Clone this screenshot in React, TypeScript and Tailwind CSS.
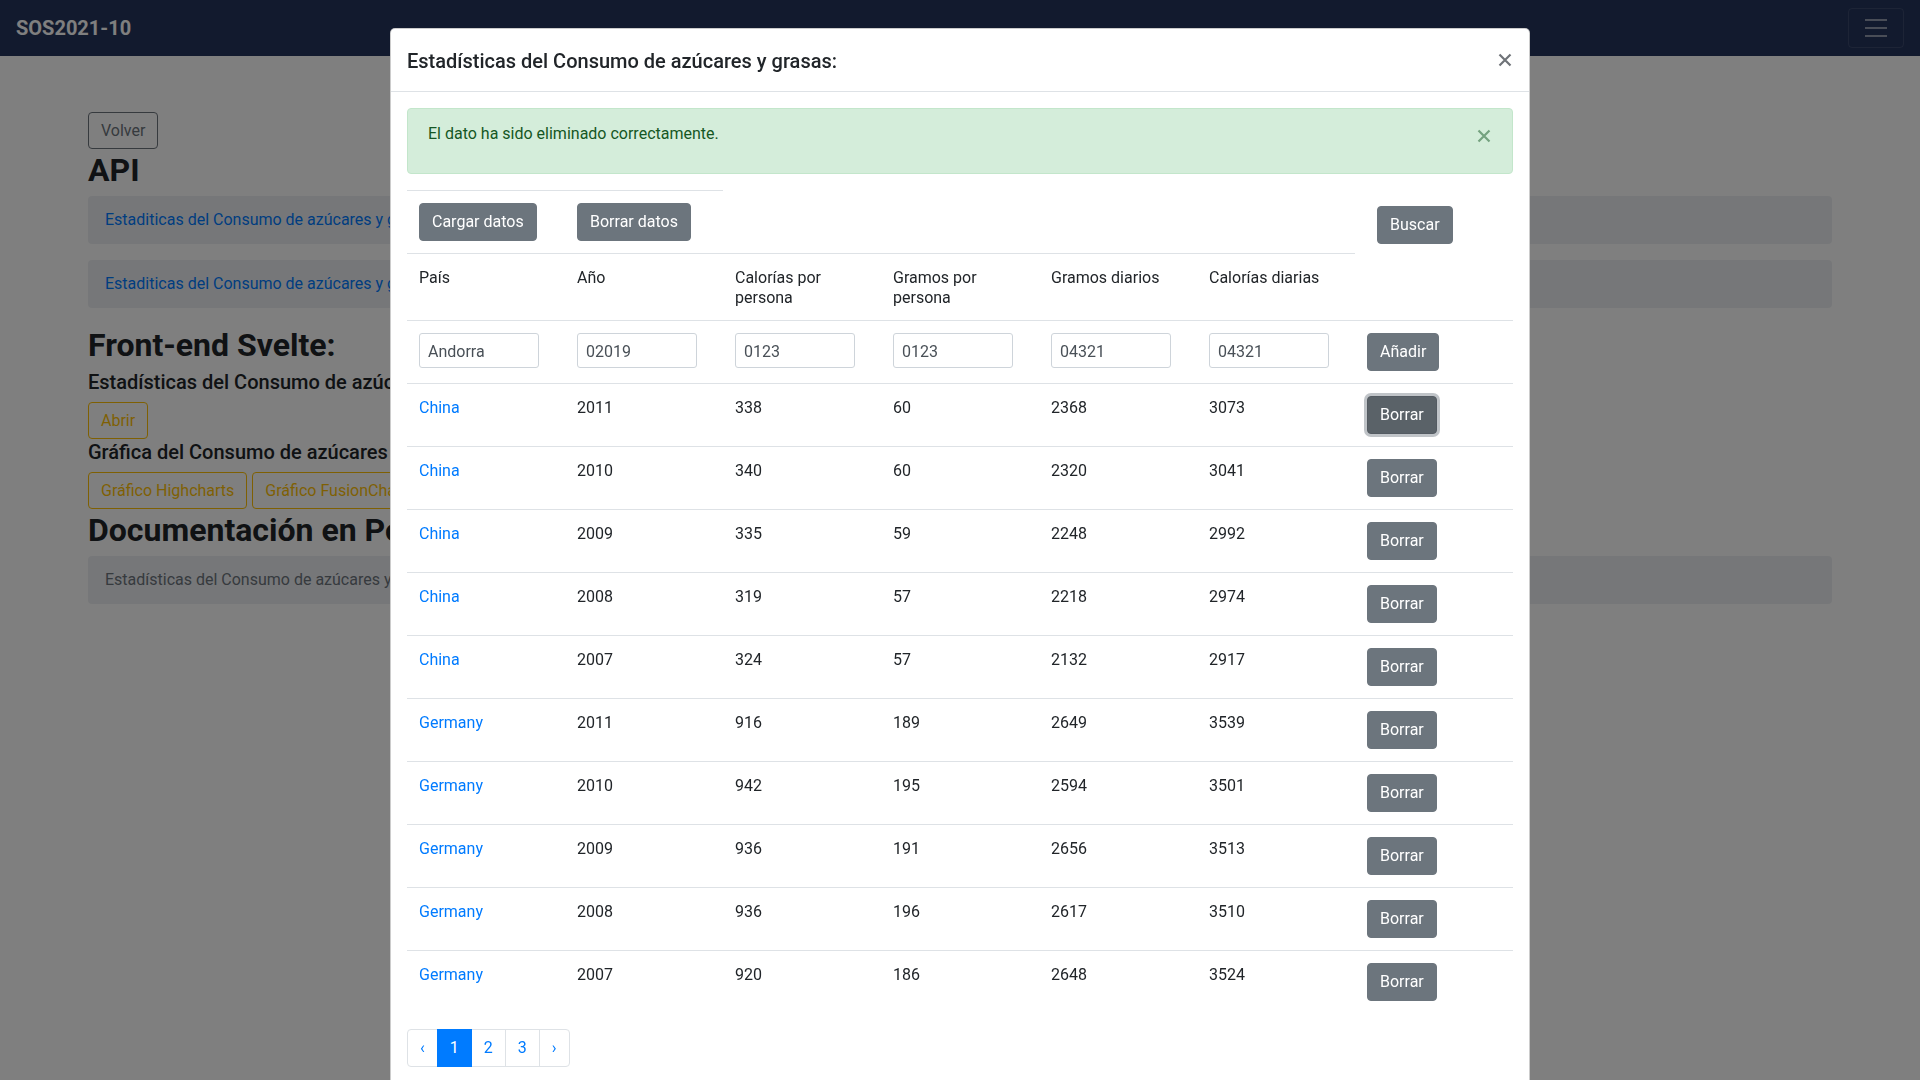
import React from "react";

// ─── Data ─────────────────────────────────────────────────────────────────────

const ROWS: [string, number, number, number, number, number][] = [
  ["China", 2011, 338, 60, 2368, 3073],
  ["China", 2010, 340, 60, 2320, 3041],
  ["China", 2009, 335, 59, 2248, 2992],
  ["China", 2008, 319, 57, 2218, 2974],
  ["China", 2007, 324, 57, 2132, 2917],
  ["Germany", 2011, 916, 189, 2649, 3539],
  ["Germany", 2010, 942, 195, 2594, 3501],
  ["Germany", 2009, 936, 191, 2656, 3513],
  ["Germany", 2008, 936, 196, 2617, 3510],
  ["Germany", 2007, 920, 186, 2648, 3524],
];

const HEADERS = ["País", "Año", "Calorías por persona", "Gramos por persona", "Gramos diarios", "Calorías diarias"];
const INPUTS = ["Andorra", "02019", "0123", "0123", "04321", "04321"];

// ─── Small bits ───────────────────────────────────────────────────────────────

function Btn({ children, focused }: { children: React.ReactNode; focused?: boolean }) {
  return (
    <button
      className={
        focused
          ? "h-[38px] px-3 rounded-[4px] border border-[#545b62] bg-[#5a6268] text-white text-[16px] leading-6 whitespace-nowrap shadow-[0_0_0_3px_rgba(130,138,145,0.5)]"
          : "h-[38px] px-3 rounded-[4px] border border-[#6c757d] bg-[#6c757d] text-white text-[16px] leading-6 whitespace-nowrap"
      }
    >
      {children}
    </button>
  );
}

function CloseX({ color }: { color: string }) {
  return (
    <svg width="16" height="16" viewBox="0 0 16 16">
      <path d="M2.5 2.5l11 11M13.5 2.5l-11 11" stroke={color} strokeWidth="2.2" strokeLinecap="butt" />
    </svg>
  );
}

// ─── Main ─────────────────────────────────────────────────────────────────────

export default function App() {
  return (
    <div className="relative h-screen overflow-hidden bg-white text-[#212529] font-['Roboto',_'Liberation_Sans',_sans-serif] text-[16px] leading-6">
      {/* navbar */}
      <nav className="h-14 bg-[#24345c] flex items-center justify-between px-4">
        <span className="text-white text-[20px] font-bold leading-[30px]">SOS2021-10</span>
        <button className="w-[56px] h-[40px] rounded-[4px] border border-white/10 flex items-center justify-center">
          <svg width="30" height="30" viewBox="0 0 30 30">
            <path d="M4 7h22M4 15h22M4 23h22" stroke="rgba(255,255,255,0.5)" strokeWidth="2" />
          </svg>
        </button>
      </nav>

      {/* page behind the modal */}
      <main className="px-[88px] pt-[56px]">
        <button className="h-[37px] px-3 rounded-[4px] border border-[#6c757d] text-[#6c757d]">Volver</button>
        <h2 className="mt-[2px] mb-[7px] text-[32px] font-bold leading-[38px]">API</h2>
        <div className="h-12 mb-4 px-[17px] py-3 rounded-[4px] bg-[#edeff3] text-[#007bff] whitespace-nowrap">
          Estaditicas del Consumo de azúcares y grasas v1
        </div>
        <div className="h-12 mb-[18px] px-[17px] py-3 rounded-[4px] bg-[#edeff3] text-[#007bff] whitespace-nowrap">
          Estaditicas del Consumo de azúcares y grasas v2
        </div>
        <h2 className="mb-[6px] text-[32px] font-bold leading-[38px]">Front-end Svelte:</h2>
        <h5 className="mb-2 text-[20px] font-medium leading-6">Estadísticas del Consumo de azúcares y grasas:</h5>
        <button className="h-[37px] px-3 rounded-[4px] border border-[#ffc107] text-[#ffc107]">Abrir</button>
        <h5 className="mt-[1px] mb-2 text-[20px] font-medium leading-6">Gráfica del Consumo de azúcares y grasas:</h5>
        <div className="flex gap-[5px]">
          <button className="h-[37px] px-3 rounded-[4px] border border-[#ffc107] text-[#ffc107]">Gráfico Highcharts</button>
          <button className="h-[37px] px-3 rounded-[4px] border border-[#ffc107] text-[#ffc107]">Gráfico FusionCharts</button>
        </div>
        <h2 className="mt-[2px] mb-[7px] text-[32px] font-bold leading-[38px]">Documentación en Postman</h2>
        <div className="h-12 px-[17px] py-3 rounded-[4px] bg-[#edeff3] text-[#6c757d] whitespace-nowrap">
          Estadísticas del Consumo de azúcares y grasas
        </div>
      </main>

      {/* backdrop */}
      <div className="fixed inset-0 bg-black/50" />

      {/* modal */}
      <div className="fixed inset-0 overflow-hidden">
        <div className="mx-auto mt-[28px] w-[1140px] rounded-[5px] border border-black/20 bg-white">
          <div className="flex items-start justify-between p-4 border-b border-[#dee2e6]">
            <h5 className="relative top-px text-[20px] font-medium leading-[30px]">Estadísticas del Consumo de azúcares y grasas:</h5>
            <div className="h-[30px] flex items-center">
              <CloseX color="#6f7378" />
            </div>
          </div>

          <div className="p-4">
            {/* alert */}
            <div className="relative mb-4 h-[66px] rounded-[4px] border border-[#c3e6cb] bg-[#d4edda] text-[#155724] pl-5 pr-16 pt-3">
              <p className="pt-px">El dato ha sido eliminado correctamente.</p>
              <div className="absolute right-[20px] top-[19px]">
                <CloseX color="#74a27f" />
              </div>
            </div>

            {/* table */}
            <div className="w-[1106px]">
              <div className="flex">
                <div className="flex w-[316px] border-t border-[#dee2e6]">
                  <div className="w-[158px] p-3"><Btn>Cargar datos</Btn></div>
                  <div className="w-[158px] p-3"><Btn>Borrar datos</Btn></div>
                </div>
                <div className="w-[632px]" />
                <div className="w-[158px] pl-[22px] pt-4"><Btn>Buscar</Btn></div>
              </div>

              <div className="flex">
                <div className="flex w-[948px] border-t border-[#dee2e6]">
                  {HEADERS.map(h => (
                    <div key={h} className="w-[158px] px-3 pt-[14px] pb-[12px] leading-5">{h}</div>
                  ))}
                </div>
                <div className="w-[158px]" />
              </div>

              <div className="flex border-t border-[#dee2e6]">
                {INPUTS.map((v, i) => (
                  <div key={i} className="w-[158px] p-3">
                    <input
                      readOnly
                      value={v}
                      className="w-[120px] h-[35px] px-2 pt-px rounded-[3px] border border-[#ced4da] text-[#495057] text-[16px] outline-none"
                    />
                  </div>
                ))}
                <div className="w-[158px] p-3"><Btn>Añadir</Btn></div>
              </div>

              {ROWS.map((r, i) => (
                <div key={i} className="flex border-t border-[#dee2e6]">
                  <div className="w-[158px] p-3 text-[#007bff]">{r[0]}</div>
                  {r.slice(1).map((c, j) => (
                    <div key={j} className="w-[158px] p-3">{c}</div>
                  ))}
                  <div className="w-[158px] p-3"><Btn focused={i === 0}>Borrar</Btn></div>
                </div>
              ))}
            </div>

            {/* pagination */}
            <div className="mt-4 flex">
              <span className="h-[38px] px-3 flex items-center border border-[#dee2e6] rounded-l-[4px] text-[#007bff]">‹</span>
              <span className="relative z-10 -ml-px h-[38px] px-3 flex items-center border border-[#007bff] bg-[#007bff] text-white">1</span>
              <span className="-ml-px h-[38px] px-3 flex items-center border border-[#dee2e6] text-[#007bff]">2</span>
              <span className="-ml-px h-[38px] px-3 flex items-center border border-[#dee2e6] text-[#007bff]">3</span>
              <span className="-ml-px h-[38px] px-3 flex items-center border border-[#dee2e6] rounded-r-[4px] text-[#007bff]">›</span>
            </div>
          </div>
        </div>
      </div>
    </div>
  );
}
